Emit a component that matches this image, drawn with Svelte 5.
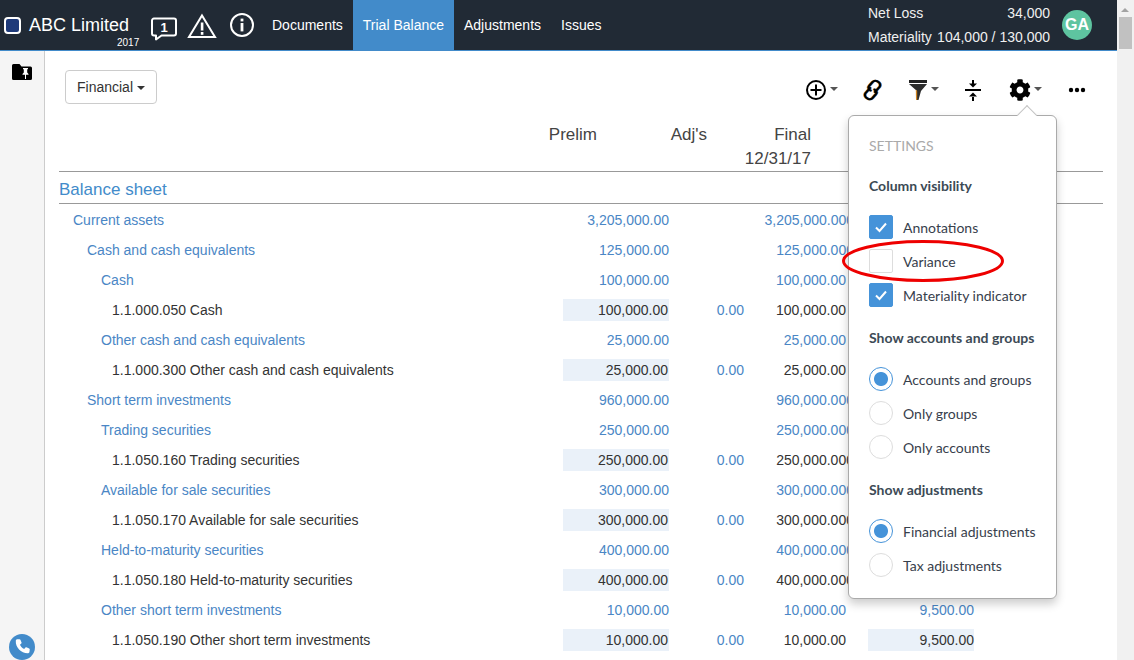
<script>
  const rows = [
    { level: 1, label: 'Current assets', prelim: '3,205,000.00', final: '3,205,000.00', cut: true },
    { level: 2, label: 'Cash and cash equivalents', prelim: '125,000.00', final: '125,000.00', cut: true },
    { level: 3, label: 'Cash', prelim: '100,000.00', final: '100,000.00' },
    { level: 4, label: '1.1.000.050 Cash', prelim: '100,000.00', adj: '0.00', final: '100,000.00' },
    { level: 3, label: 'Other cash and cash equivalents', prelim: '25,000.00', final: '25,000.00' },
    { level: 4, label: '1.1.000.300 Other cash and cash equivalents', prelim: '25,000.00', adj: '0.00', final: '25,000.00' },
    { level: 2, label: 'Short term investments', prelim: '960,000.00', final: '960,000.00', cut: true },
    { level: 3, label: 'Trading securities', prelim: '250,000.00', final: '250,000.00', cut: true },
    { level: 4, label: '1.1.050.160 Trading securities', prelim: '250,000.00', adj: '0.00', final: '250,000.00', cut: true },
    { level: 3, label: 'Available for sale securities', prelim: '300,000.00', final: '300,000.00', cut: true },
    { level: 4, label: '1.1.050.170 Available for sale securities', prelim: '300,000.00', adj: '0.00', final: '300,000.00', cut: true },
    { level: 3, label: 'Held-to-maturity securities', prelim: '400,000.00', final: '400,000.00', cut: true },
    { level: 4, label: '1.1.050.180 Held-to-maturity securities', prelim: '400,000.00', adj: '0.00', final: '400,000.00', cut: true },
    { level: 3, label: 'Other short term investments', prelim: '10,000.00', final: '10,000.00', last: '9,500.00' },
    { level: 4, label: '1.1.050.190 Other short term investments', prelim: '10,000.00', adj: '0.00', final: '10,000.00', last: '9,500.00' }
  ];
  const linkPath = 'M7.500 11.500 6 10Q4.800 8.500 6 7L9.500 3Q11.500 1 14 2.200L16 3.500Q18 5.500 16.500 8L12 13M11.500 10.500 13 12Q14.200 13.500 13 15L9.500 19Q7.500 21 5 19.800L3 18.500Q1 16.500 2.500 14L7 9';
</script>

<div class="page">
  <header class="topbar">
    <div class="brand">
      <span class="logo"></span>
      <span class="company">ABC Limited</span>
      <span class="year">2017</span>
    </div>
    <div class="alerts">
      <svg width="28" height="26" viewBox="0 0 28 26" class="ic-chat">
        <path d="M4 3.500h20a2 2 0 0 1 2 2v13a2 2 0 0 1-2 2H11.500L6 24.500v-4H4a2 2 0 0 1-2-2v-13a2 2 0 0 1 2-2z" fill="none" stroke="#fff" stroke-width="2" stroke-linejoin="round" />
        <text x="14" y="17" text-anchor="middle" class="chat-num">1</text>
      </svg>
      <svg width="30" height="26" viewBox="0 0 30 26" class="ic-warn">
        <path d="M15 2.500 28 24H2z" fill="none" stroke="#fff" stroke-width="2" stroke-linejoin="miter" />
        <rect x="13.800" y="9.500" width="2.600" height="8" fill="#fff" />
        <rect x="13.800" y="19" width="2.600" height="2.800" fill="#fff" />
      </svg>
      <svg width="26" height="26" viewBox="0 0 26 26" class="ic-info">
        <circle cx="13" cy="13" r="11" fill="none" stroke="#fff" stroke-width="2" />
        <rect x="11.600" y="11" width="2.800" height="8.400" fill="#fff" />
        <rect x="11.600" y="6.600" width="2.800" height="2.800" fill="#fff" />
      </svg>
    </div>
    <nav class="nav">
      <span class="nav-item">Documents</span>
      <span class="nav-item active">Trial Balance</span>
      <span class="nav-item">Adjustments</span>
      <span class="nav-item">Issues</span>
    </nav>
    <div class="summary">
      <div class="sum-row"><span>Net Loss</span><span>34,000</span></div>
      <div class="sum-row"><span>Materiality</span><span>104,000 / 130,000</span></div>
    </div>
    <div class="avatar">GA</div>
  </header>

  <div class="body">
    <aside class="rail">
      <svg class="pin-folder" width="20" height="16" viewBox="0 0 20 16">
        <path d="M1.500 0h6l2 2.500h9A1.500 1.500 0 0 1 20 4v10.500a1.500 1.500 0 0 1-1.500 1.500h-17A1.500 1.500 0 0 1 0 14.500v-13A1.500 1.500 0 0 1 1.500 0z" fill="#000" />
        <path d="M11 4h5v1l-.8.500v3l1.300 1.500v.8h-2.500V15h-1v-4.200h-2.500V10l1.300-1.500v-3L11 5z" fill="#fff" />
      </svg>
      <span class="phone">
        <svg width="18" height="18" viewBox="0 0 16 16">
          <path d="M3.600 1.200 5.800 1c.4 0 .6.200.8.500l1 2.500c.1.300 0 .6-.2.800L6.200 6c.7 1.500 2 2.900 3.700 3.800l1.200-1.300c.2-.2.500-.3.800-.2l2.500 1c.3.200.5.500.5.800l-.3 2.300c-.1.500-.5 1-1.100 1.100C7.500 13.800 2 8.300 2.500 2.400c.1-.6.500-1.100 1.100-1.200z" fill="#fff" />
        </svg>
      </span>
    </aside>

    <main class="content">
      <div class="toolbar">
        <button class="dropdown">Financial<i class="caret dark"></i></button>
        <div class="tools">
          <span class="tool plus">
            <svg width="22" height="22" viewBox="0 0 22 22">
              <circle cx="11" cy="11" r="9" fill="none" stroke="#000" stroke-width="2" />
              <path d="M11 5.500v11M5.500 11h11" stroke="#000" stroke-width="2" />
            </svg>
            <i class="caret"></i>
          </span>
          <span class="tool link">
            <svg width="19" height="22" viewBox="0 0 19 22">
              <path d={linkPath} transform="translate(-.7 0)" fill="none" stroke="#e08a20" stroke-width="2" stroke-linecap="round" />
              <path d={linkPath} transform="translate(.7 0)" fill="none" stroke="#2a70c0" stroke-width="2" stroke-linecap="round" />
              <path d={linkPath} fill="none" stroke="#000" stroke-width="2" stroke-linecap="round" />
            </svg>
          </span>
          <span class="tool filter">
            <svg width="20" height="22" viewBox="0 0 20 22">
              <rect x="1" y="1" width="18" height="3" fill="#222" />
              <path d="M1 5h18l-6 7-2.500 9H9v-9z" fill="#2c2c2c" />
              <path d="M7.800 10.500 9.200 12v9H8z" fill="#d08420" />
            </svg>
            <i class="caret"></i>
          </span>
          <span class="tool compress">
            <svg width="16" height="22" viewBox="0 0 16 22">
              <path d="M0 11h16" stroke="#000" stroke-width="2" />
              <path d="M8 1v4M8 18v4" stroke="#000" stroke-width="2" />
              <path d="M4 4.500h8L8 8.500zM4 17.500h8L8 13.500z" fill="#000" />
            </svg>
          </span>
          <span class="tool gear">
            <svg width="22" height="22" viewBox="0 0 512 512">
              <path fill="#000" d="M487.400 315.700l-42.600-24.600c4.300-23.200 4.300-47 0-70.200l42.600-24.600c4.900-2.800 7.100-8.600 5.500-14-11.100-35.600-30-67.800-54.700-94.600-3.800-4.100-10-5.100-14.800-2.300L380.800 110c-17.900-15.400-38.500-27.300-60.800-35.100V25.800c0-5.600-3.900-10.500-9.400-11.700-36.700-8.200-74.300-7.800-109.200 0-5.500 1.200-9.400 6.100-9.400 11.700V75c-22.200 7.900-42.800 19.800-60.800 35.100L88.700 85.500c-4.900-2.800-11-1.900-14.800 2.300-24.700 26.700-43.600 58.900-54.700 94.600-1.700 5.400.6 11.200 5.500 14L67.300 221c-4.300 23.200-4.300 47 0 70.200l-42.600 24.600c-4.900 2.800-7.100 8.600-5.500 14 11.100 35.600 30 67.800 54.700 94.600 3.800 4.100 10 5.100 14.800 2.300l42.600-24.600c17.900 15.400 38.500 27.300 60.800 35.100v49.200c0 5.600 3.900 10.500 9.400 11.700 36.700 8.200 74.300 7.800 109.200 0 5.500-1.200 9.400-6.100 9.400-11.700v-49.200c22.200-7.900 42.800-19.800 60.800-35.100l42.600 24.600c4.900 2.800 11 1.900 14.800-2.300 24.700-26.700 43.600-58.900 54.700-94.600 1.500-5.500-.7-11.300-5.600-14.100zM256 336c-44.100 0-80-35.900-80-80s35.900-80 80-80 80 35.900 80 80-35.900 80-80 80z" />
            </svg>
            <i class="caret"></i>
          </span>
          <span class="tool dots">
            <svg width="18" height="6" viewBox="0 0 18 6">
              <circle cx="3" cy="3" r="2.200" fill="#000" />
              <circle cx="9" cy="3" r="2.200" fill="#000" />
              <circle cx="15" cy="3" r="2.200" fill="#000" />
            </svg>
          </span>
        </div>
      </div>

      <div class="col-heads">
        <div class="head">Prelim</div>
        <div class="head">Adj's</div>
        <div class="head">Final<small>12/31/17</small></div>
      </div>

      <div class="section">Balance sheet</div>

      <div class="table">
        {#each rows as row}
          <div class="row" class:leaf={row.level === 4}>
            <div class="label lvl{row.level}">{row.label}</div>
            <div class="cell prelim-cell">{row.prelim}</div>
            <div class="cell adj-cell">{row.adj ?? ''}</div>
            <div class="cell final-cell" class:cut={row.cut}>{row.final}</div>
            <div class="cell last-cell">{row.last ?? ''}</div>
          </div>
        {/each}
      </div>
    </main>

    <div class="settings">
      <span class="arrow"></span>
      <div class="set-title">SETTINGS</div>
      <div class="set-head first">Column visibility</div>
      <label class="opt"><span class="box on"><svg width="14" height="12" viewBox="0 0 14 12"><path d="M2 6.500 5.500 10 12 2.500" fill="none" stroke="#fff" stroke-width="2" /></svg></span>Annotations</label>
      <label class="opt"><span class="box"></span>Variance</label>
      <label class="opt"><span class="box on"><svg width="14" height="12" viewBox="0 0 14 12"><path d="M2 6.500 5.500 10 12 2.500" fill="none" stroke="#fff" stroke-width="2" /></svg></span>Materiality indicator</label>
      <div class="set-head">Show accounts and groups</div>
      <label class="opt"><span class="radio on"></span>Accounts and groups</label>
      <label class="opt"><span class="radio"></span>Only groups</label>
      <label class="opt"><span class="radio"></span>Only accounts</label>
      <div class="set-head">Show adjustments</div>
      <label class="opt"><span class="radio on"></span>Financial adjustments</label>
      <label class="opt"><span class="radio"></span>Tax adjustments</label>
    </div>

    <svg class="circle-mark" width="164" height="46" viewBox="0 0 164 46">
      <ellipse cx="82" cy="23" rx="79.500" ry="19.500" fill="none" stroke="#ee0000" stroke-width="3" />
    </svg>
  </div>

  <div class="scrollbar">
    <span class="up"></span>
    <span class="thumb"></span>
  </div>
</div>

<style>
  :global(body) {
    margin: 0;
    overflow: hidden;
  }
  .page {
    position: relative;
    width: 1134px;
    height: 660px;
    overflow: hidden;
    background: #fff;
    font-family: "Liberation Sans", Arial, sans-serif;
    font-size: 14px;
    color: #333;
  }
  .topbar {
    width: 1117px;
    height: 50px;
    display: flex;
    background: #212a35;
    border-bottom: 1px solid #428bca;
    color: #fff;
  }
  .brand {
    position: relative;
    width: 147px;
    display: flex;
    align-items: center;
    padding-left: 4px;
    box-sizing: border-box;
  }
  .logo {
    width: 13px;
    height: 13px;
    border: 2px solid #fff;
    border-radius: 4px;
    background: #1e3a7a;
    margin-right: 8px;
  }
  .company {
    font-size: 18px;
  }
  .year {
    position: absolute;
    left: 117px;
    top: 37px;
    font-size: 10px;
  }
  .alerts {
    width: 115px;
    position: relative;
  }
  .alerts svg {
    position: absolute;
  }
  .ic-chat { left: 3px; top: 15px; }
  .ic-warn { left: 40px; top: 13px; }
  .ic-info { left: 82px; top: 12px; }
  .chat-num {
    font-size: 13px;
    font-weight: 700;
    fill: #fff;
    font-family: "Liberation Sans", Arial, sans-serif;
  }
  .nav {
    display: flex;
  }
  .nav-item {
    padding: 0 10px;
    line-height: 50px;
    font-size: 14px;
  }
  .nav-item.active {
    background: #428bca;
  }
  .summary {
    margin-left: auto;
    width: 182px;
    padding-top: 1px;
    font-size: 14px;
    line-height: 24px;
    color: #f0f0f0;
    box-sizing: border-box;
  }
  .sum-row {
    display: flex;
    justify-content: space-between;
  }
  .avatar {
    width: 30px;
    height: 30px;
    margin: 10px 25px 0 12px;
    border-radius: 50%;
    background: #5ec4a0;
    color: #fff;
    font-weight: 700;
    font-size: 16px;
    line-height: 30px;
    text-align: center;
  }
  .body {
    position: relative;
    width: 1117px;
    height: 609px;
    display: flex;
  }
  .rail {
    position: relative;
    width: 44px;
    flex: none;
    background: #f5f5f5;
    border-right: 1px solid #ccc;
  }
  .pin-folder {
    position: absolute;
    left: 12px;
    top: 13px;
  }
  .phone {
    position: absolute;
    left: 9px;
    top: 583px;
    width: 26px;
    height: 26px;
    border-radius: 50%;
    background: #428bca;
    display: flex;
    align-items: center;
    justify-content: center;
  }
  .content {
    flex: 1;
    min-width: 0;
    padding: 0 14px;
  }
  .toolbar {
    display: flex;
    justify-content: space-between;
    height: 70px;
    padding-top: 19px;
    box-sizing: border-box;
  }
  .dropdown {
    width: 92px;
    height: 34px;
    margin-left: 6px;
    padding: 0;
    background: #fff;
    border: 1px solid #ccc;
    border-radius: 4px;
    font: inherit;
    color: #333;
  }
  .caret {
    display: inline-block;
    width: 0;
    height: 0;
    margin-left: 4px;
    border-top: 4px solid #333;
    border-left: 4px solid transparent;
    border-right: 4px solid transparent;
    vertical-align: middle;
  }
  .tools {
    position: relative;
    width: 300px;
  }
  .tool {
    position: absolute;
    display: flex;
    align-items: center;
    top: 8px;
    height: 24px;
  }
  .tool .caret {
    margin-left: 3px;
    margin-top: -2px;
    border-top-color: #555;
  }
  .plus { left: 2px; }
  .link { left: 60px; }
  .filter { left: 105px; }
  .compress { left: 162px; }
  .gear { left: 206px; }
  .dots { left: 265px; }
  .col-heads {
    display: grid;
    grid-template-columns: 538px 110px 104px;
    height: 51px;
    border-bottom: 1px solid #999;
    font-size: 17px;
    color: #444;
    box-sizing: border-box;
  }
  .head {
    text-align: right;
    padding-top: 5px;
    line-height: 18px;
    white-space: nowrap;
  }
  .head small {
    display: block;
    font-size: 17px;
    margin-top: 6px;
  }
  .section {
    height: 32px;
    line-height: 35px;
    font-size: 17px;
    color: #428bca;
    border-bottom: 1px solid #999;
    box-sizing: border-box;
  }
  .table {
    padding-top: 1px;
  }
  .row {
    display: grid;
    grid-template-columns: 490px 120px 75px 102px 128px;
    height: 30px;
    line-height: 30px;
    color: #4a86c5;
  }
  .row.leaf {
    color: #333;
  }
  .label {
    white-space: nowrap;
  }
  .lvl1 { padding-left: 14px; }
  .lvl2 { padding-left: 28px; }
  .lvl3 { padding-left: 42px; }
  .lvl4 { padding-left: 53px; }
  .cell {
    text-align: right;
    white-space: nowrap;
  }
  .prelim-cell {
    width: 106px;
    margin-left: 14px;
  }
  .leaf .prelim-cell {
    margin-top: 4px;
    margin-bottom: 4px;
    padding-right: 1px;
    box-sizing: border-box;
    height: 22px;
    line-height: 23px;
    background: #eaf1f9;
  }
  .leaf .adj-cell {
    color: #4a86c5;
  }
  .final-cell.cut::after {
    content: "0";
  }
  .final-cell.cut {
    margin-right: -8px;
  }
  .last-cell {
    width: 106px;
    margin-left: 22px;
  }
  .leaf .last-cell {
    margin-top: 4px;
    margin-bottom: 4px;
    height: 22px;
    line-height: 23px;
    background: #eaf1f9;
  }
  .settings {
    position: absolute;
    left: 848px;
    top: 64px;
    width: 209px;
    height: 484px;
    padding: 21px 20px 0;
    box-sizing: border-box;
    background: #fff;
    border: 1px solid #aaa;
    border-radius: 6px;
    box-shadow: 0 5px 10px rgba(0, 0, 0, 0.2);
    font-family: Lato, sans-serif;
    font-size: 14px;
    color: #37404c;
  }
  .arrow {
    position: absolute;
    top: -8px;
    left: 171px;
    width: 14px;
    height: 14px;
    box-sizing: border-box;
    background: #fff;
    border-left: 1px solid #c4c4c4;
    border-top: 1px solid #c4c4c4;
    transform: rotate(45deg);
  }
  .set-title {
    color: #aaa;
    line-height: 18px;
    font-size: 14px;
  }
  .set-head {
    font-weight: 700;
    font-size: 14px;
    line-height: 18px;
    color: #3c4a55;
    margin: 17px 0 15px;
  }
  .set-head.first {
    margin-top: 22px;
  }
  .opt {
    display: flex;
    align-items: center;
    height: 34px;
    white-space: nowrap;
    font-size: 14px;
    gap: 10px;
  }
  .box {
    width: 24px;
    height: 24px;
    box-sizing: border-box;
    border: 1px solid #ddd;
    border-radius: 2px;
    display: flex;
    align-items: center;
    justify-content: center;
  }
  .box.on {
    background: #4593d9;
    border-color: #4593d9;
  }
  .radio {
    width: 24px;
    height: 24px;
    box-sizing: border-box;
    border: 1px solid #ddd;
    border-radius: 50%;
    display: block;
  }
  .radio.on {
    border-color: #4593d9;
    background: radial-gradient(circle, #4593d9 0 6.500px, #fff 7.500px);
  }
  .circle-mark {
    position: absolute;
    left: 841px;
    top: 187px;
    pointer-events: none;
  }
  .scrollbar {
    position: absolute;
    top: 0;
    right: 0;
    bottom: 0;
    width: 17px;
    background: #f1f1f1;
  }
  .up {
    position: absolute;
    left: 4px;
    top: 8px;
    border-bottom: 4px solid #a3a3a3;
    border-left: 4.500px solid transparent;
    border-right: 4.500px solid transparent;
  }
  .thumb {
    position: absolute;
    left: 2px;
    top: 17px;
    width: 13px;
    height: 32px;
    background: #c1c1c1;
  }
</style>
